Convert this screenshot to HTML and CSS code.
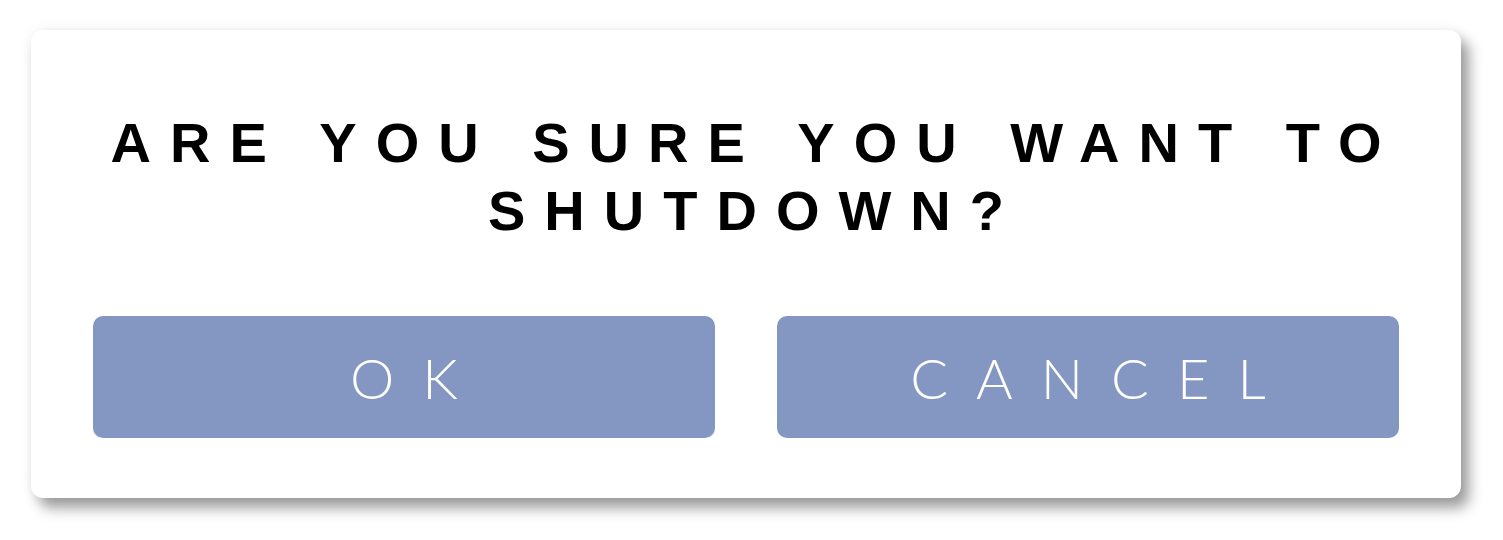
FILE: index.html
```html
<!DOCTYPE html>
<html lang="en">
<head>
  <meta charset="UTF-8">
  <meta name="viewport" content="width=device-width, initial-scale=1.0">
  <title>Shutdown</title>
  <link rel="stylesheet" href="styles.css">
</head>
<body>
  <!-- Confirm dialog -->
  <div class="dialog">
    <h1 class="dialog-title">Are you sure you want to shutdown?</h1>
    <div class="dialog-actions">
      <button class="dialog-btn">OK</button>
      <button class="dialog-btn">Cancel</button>
    </div>
  </div>
</body>
</html>
```

FILE: styles.css
```css
/* General Styles */
html,
body {
  min-height: 100%;
}

body {
  margin: 0;
  padding: 30px 0 42px;
  background: #fff;
  font-family: 'Liberation Sans', Arial, sans-serif;
}

/* Dialog */
.dialog {
  width: 1430px;
  box-sizing: border-box;
  margin-left: 31px;
  padding: 79px 62px 60px;
  background: #fff;
  border-radius: 12px;
  box-shadow: 8px 10px 14px rgba(0, 0, 0, 0.38), 0 0 14px rgba(0, 0, 0, 0.06);
}

.dialog-title {
  margin: 0 -20px;
  padding-left: 19px;
  font-size: 56px;
  line-height: 68px;
  font-weight: 700;
  letter-spacing: 19px;
  text-transform: uppercase;
  text-align: center;
  color: #000;
}

.dialog-actions {
  display: flex;
  gap: 62px;
  margin-top: 71px;
}

.dialog-btn {
  flex: 1;
  height: 122px;
  padding: 0 0 0 28px;
  border: none;
  border-radius: 10px;
  background: #8497c2;
  color: #fff;
  font-family: 'Lato', sans-serif;
  font-weight: 300;
  font-size: 56px;
  letter-spacing: 28px;
  text-transform: uppercase;
}
```
